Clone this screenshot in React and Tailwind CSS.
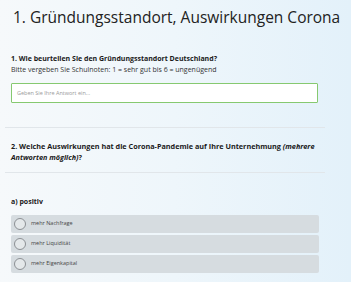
export default function App() {
  const options = ["mehr Nachfrage", "mehr Liquidität", "mehr Eigenkapital"];
  return (
    <div
      className="w-[351px] h-[282px] overflow-hidden bg-gradient-to-r from-[#f6f9fb] via-[#eef6fb] to-[#e3f1fa] text-[#1a1a1a]"
      style={{ fontFamily: '"Open Sans", sans-serif' }}
    >
      {/* Title */}
      <h1 className="pl-[13px] pt-[7px] text-[15.5px] leading-[20px] font-normal text-[#222] whitespace-nowrap">
        1. Gründungsstandort, Auswirkungen Corona
      </h1>

      {/* Question 1 */}
      <div className="pl-[11px] pr-[33px] mt-[27px]">
        <p className="text-[7px] leading-[10.5px] font-bold">
          1. Wie beurteilen Sie den Gründungsstandort Deutschland?
        </p>
        <p className="text-[7px] leading-[10.5px] text-[#333]">
          Bitte vergeben Sie Schulnoten: 1 = sehr gut bis 6 = ungenügend
        </p>
        <div className="mt-[8px] h-[20px] border border-[#86c970] bg-white rounded-[1px] flex items-center pl-[5px]">
          <span className="text-[5.5px] text-[#9a9a9a]">Geben Sie Ihre Antwort ein...</span>
        </div>
      </div>

      <div className="ml-[5px] w-[320px] mt-[24px] border-t border-[#e1e6ea]" />

      {/* Question 2 */}
      <div className="pl-[11px] pr-[26px] pt-[13px] pb-[10px]">
        <p className="text-[7.25px] leading-[10.5px] font-bold">
          2. Welche Auswirkungen hat die Corona-Pandemie auf Ihre Unternehmung{" "}
          <em>(mehrere Antworten möglich)</em>?
        </p>
      </div>

      <div className="ml-[5px] w-[320px] border-t border-[#e1e6ea]" />

      {/* a) positiv */}
      <div className="pl-[11px] pr-[32px] pt-[24px]">
        <p className="text-[7px] leading-[10.5px] font-bold">a) positiv</p>
        <div className="mt-[7px] flex flex-col gap-[2px]">
          {options.map((o) => (
            <div
              key={o}
              className="h-[18px] bg-[#d6dce0] rounded-[2px] flex items-center pl-[3px] gap-[5px]"
            >
              <span className="w-[12px] h-[12px] rounded-full border border-[#8c9094] bg-[#e4e8ea]" />
              <span className="text-[5.5px] text-[#444]">{o}</span>
            </div>
          ))}
        </div>
      </div>
    </div>
  );
}
